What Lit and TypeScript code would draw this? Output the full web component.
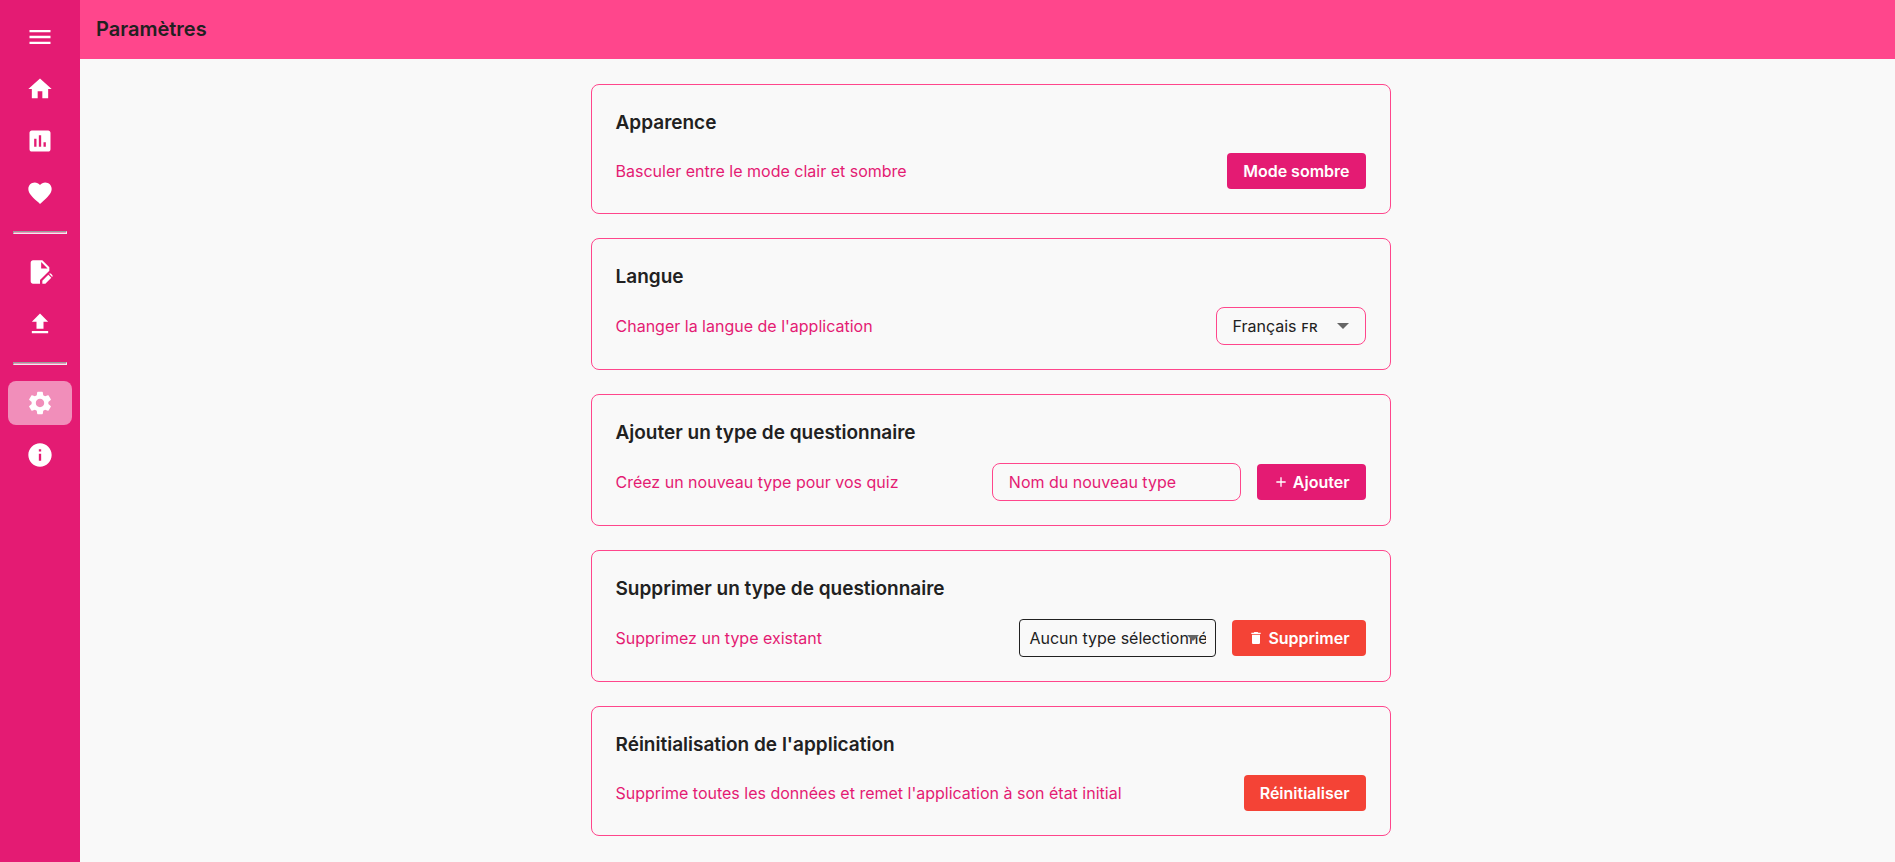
import { LitElement, html, css, svg } from "lit";
import { customElement, property, state } from "lit/decorators.js";

const ICONS: Record<string, string> = {
  menu: "M3 18h18v-2H3v2zm0-5h18v-2H3v2zm0-7v2h18V6H3z",
  home: "M10 20v-6h4v6h5v-8h3L12 3 2 12h3v8z",
  stats:
    "M19 3H5c-1.1 0-2 .9-2 2v14c0 1.1.9 2 2 2h14c1.1 0 2-.9 2-2V5c0-1.100-.9-2-2-2zM9 17H7v-7h2v7zm4 0h-2V7h2v10zm4 0h-2v-4h2v4z",
  heart:
    "m12 21.350-1.450-1.320C5.400 15.360 2 12.280 2 8.500 2 5.420 4.420 3 7.500 3c1.740 0 3.410.810 4.500 2.090C13.090 3.810 14.760 3 16.500 3 19.580 3 22 5.420 22 8.500c0 3.780-3.400 6.860-8.550 11.540L12 21.350z",
  edit:
    "M6 2c-1.100 0-2 .9-2 2v16c0 1.100.9 2 2 2h6v-3.080l8-8V8l-6-6H6zm7 1.500L18.500 9H13V3.500zM14 22v-2.600l5.100-5.100 2.600 2.600L16.600 22H14zM19.800 13.600c.25-.28.550-.4.850-.4.320 0 .620.120.86.36l.93.930c.24.240.36.540.36.860 0 .3-.12.600-.4.850z",
  upload: "M5 20h14v-2H5v2zm0-10h4v6h6v-6h4l-7-7-7 7z",
  settings:
    "M19.140 12.940c.04-.3.060-.61.060-.94 0-.32-.02-.64-.07-.94l2.030-1.580c.18-.14.230-.41.120-.61l-1.920-3.320c-.12-.22-.37-.29-.59-.22l-2.390.96c-.5-.38-1.030-.7-1.620-.94l-.36-2.540c-.04-.24-.24-.41-.48-.41h-3.840c-.24 0-.43.170-.47.410l-.36 2.540c-.59.240-1.130.570-1.620.940l-2.390-.96c-.22-.08-.47 0-.59.220L2.740 8.870c-.12.210-.08.470.120.610l2.030 1.580c-.05.300-.09.630-.09.940s.02.640.070.940l-2.030 1.580c-.18.140-.23.410-.12.610l1.920 3.320c.12.220.370.290.590.220l2.390-.96c.5.380 1.030.7 1.620.940l.36 2.540c.05.240.240.410.480.410h3.840c.24 0 .44-.17.470-.41l.36-2.540c.59-.24 1.130-.56 1.620-.94l2.390.960c.22.080.470 0 .59-.22l1.920-3.320c.12-.22.070-.47-.12-.61l-2.010-1.580zM12 15.600c-1.980 0-3.600-1.620-3.600-3.600s1.620-3.600 3.600-3.600 3.600 1.620 3.600 3.600-1.620 3.600-3.600 3.600z",
  info: "M12 2C6.480 2 2 6.480 2 12s4.480 10 10 10 10-4.480 10-10S17.520 2 12 2zm1 15h-2v-6h2v6zm0-8h-2V7h2v2z",
  add: "M19 13h-6v6h-2v-6H5v-2h6V5h2v6h6v2z",
  trash: "M6 19c0 1.100.9 2 2 2h8c1.100 0 2-.9 2-2V7H6v12zM19 4h-3.500l-1-1h-5l-1 1H5v2h14V4z",
  arrow: "m6 9 6 6 6-6z",
};

const icon = (name: string) => html`
  <svg class="icon" viewBox="0 0 24 24" aria-hidden="true">${svg`<path d=${ICONS[name]} />`}</svg>
`;

@customElement("side-nav")
class SideNav extends LitElement {
  static styles = css`
    :host {
      display: block;
      background: #e41b73;
    }
    .nav {
      display: flex;
      flex-direction: column;
      gap: 8px;
      padding: 15px 8px;
    }
    .item {
      display: flex;
      align-items: center;
      justify-content: center;
      height: 44px;
      padding: 0;
      border: 0;
      border-radius: 8px;
      background: transparent;
      color: #fff;
      cursor: pointer;
    }
    .item.active {
      background: #f18eba;
    }
    .icon {
      width: 28px;
      height: 28px;
      fill: currentColor;
    }
    .rule {
      box-sizing: border-box;
      align-self: stretch;
      height: 3px;
      margin: 8px 5px;
      border: 1px solid #eee;
      border-top-color: #9a9a9a;
      border-left-color: #9a9a9a;
      background: #f18eba;
    }
  `;

  @property() current = "settings";

  private link(name: string, label: string) {
    const active = name === this.current;
    return html`<a
      class="item ${active ? "active" : ""}"
      href="#${name}"
      aria-label=${label}
      aria-current=${active ? "page" : "false"}
      >${icon(name)}</a
    >`;
  }

  render() {
    return html`
      <nav class="nav">
        <button class="item" type="button" aria-label="Menu">${icon("menu")}</button>
        ${this.link("home", "Accueil")} ${this.link("stats", "Statistiques")}
        ${this.link("heart", "Favoris")}
        <hr class="rule" />
        ${this.link("edit", "Créer un quiz")} ${this.link("upload", "Importer")}
        <hr class="rule" />
        ${this.link("settings", "Paramètres")} ${this.link("info", "Informations")}
      </nav>
    `;
  }
}

@customElement("app-root")
class AppRoot extends LitElement {
  static styles = css`
    :host {
      display: grid;
      grid-template-columns: 80px 1fr;
      min-height: 100vh;
      background: #f9f9f9;
      color: #212121;
      font-family: Inter, "Liberation Sans", "DejaVu Sans", sans-serif;
      font-size: 16px;
      line-height: 20px;
    }
    .page {
      min-width: 0;
    }
    .header {
      padding: 16px;
      background: #ff468c;
    }
    .title {
      margin: 0;
      font-size: 20px;
      font-weight: 600;
      line-height: 27px;
    }
    .content {
      display: flex;
      flex-direction: column;
      gap: 24px;
      max-width: 800px;
      margin: 0 auto;
      padding: 25px 24px 25px 30px;
    }
    .card {
      padding: 24px;
      border: 1px solid #ff468c;
      border-radius: 8px;
    }
    .heading {
      margin: 0 0 16px;
      font-size: 19px;
      font-weight: 600;
      line-height: 28px;
    }
    .row {
      display: flex;
      align-items: center;
      justify-content: space-between;
      gap: 16px;
    }
    .text {
      color: #e41b73;
    }
    .controls {
      display: flex;
      align-items: center;
      gap: 16px;
    }
    .button {
      display: flex;
      align-items: center;
      gap: 4px;
      height: 36px;
      padding: 0 16px;
      border: 0;
      border-radius: 4px;
      background: #e41b73;
      color: #fff;
      font: inherit;
      font-weight: 600;
      cursor: pointer;
    }
    .button.danger {
      background: #f44336;
    }
    .button .icon {
      width: 16px;
      height: 16px;
      fill: currentColor;
    }
    .field {
      box-sizing: border-box;
      height: 38px;
      padding: 0 16px;
      border: 1px solid #ff468c;
      border-radius: 8px;
      background: transparent;
      color: inherit;
      font: inherit;
      outline: none;
    }
    .field::placeholder {
      color: #e41b73;
      opacity: 1;
    }
    .picker {
      position: relative;
      display: flex;
    }
    .picker .icon {
      position: absolute;
      top: 7px;
      right: 11px;
      width: 24px;
      height: 24px;
      fill: #666;
      pointer-events: none;
    }
    .picker .field {
      appearance: none;
    }
    .language {
      width: 150px;
    }
    .name {
      width: 249px;
    }
    .picker .types {
      width: 197px;
      padding: 0 9px;
      border-color: #212121;
      border-radius: 4px;
    }
  `;

  @state() private newType = "";

  private card(heading: string, text: string, controls: unknown, field = "") {
    return html`
      <section class="card">
        <h2 class="heading">${heading}</h2>
        <div class="row">
          ${field
            ? html`<label class="text" for=${field}>${text}</label>`
            : html`<span class="text">${text}</span>`}
          <div class="controls">${controls}</div>
        </div>
      </section>
    `;
  }

  render() {
    return html`
      <side-nav current="settings"></side-nav>
      <div class="page">
        <header class="header"><h1 class="title">Paramètres</h1></header>
        <main class="content">
          ${this.card(
            "Apparence",
            "Basculer entre le mode clair et sombre",
            html`<button class="button" type="button">Mode sombre</button>`
          )}
          ${this.card(
            "Langue",
            "Changer la langue de l'application",
            html`<div class="picker">
              <select class="field language" id="language">
                <option>Français ꜰʀ</option>
              </select>
              ${icon("arrow")}
            </div>`,
            "language"
          )}
          ${this.card(
            "Ajouter un type de questionnaire",
            "Créez un nouveau type pour vos quiz",
            html`<input
                class="field name"
                id="name"
                type="text"
                placeholder="Nom du nouveau type"
                .value=${this.newType}
                @input=${(e: Event) => (this.newType = (e.target as HTMLInputElement).value)}
              />
              <button class="button" type="button">${icon("add")}Ajouter</button>`,
            "name"
          )}
          ${this.card(
            "Supprimer un type de questionnaire",
            "Supprimez un type existant",
            html`<div class="picker">
                <select class="field types" id="types">
                  <option>Aucun type sélectionné</option>
                </select>
                ${icon("arrow")}
              </div>
              <button class="button danger" type="button">${icon("trash")}Supprimer</button>`,
            "types"
          )}
          ${this.card(
            "Réinitialisation de l'application",
            "Supprime toutes les données et remet l'application à son état initial",
            html`<button class="button danger" type="button">Réinitialiser</button>`
          )}
        </main>
      </div>
    `;
  }
}
